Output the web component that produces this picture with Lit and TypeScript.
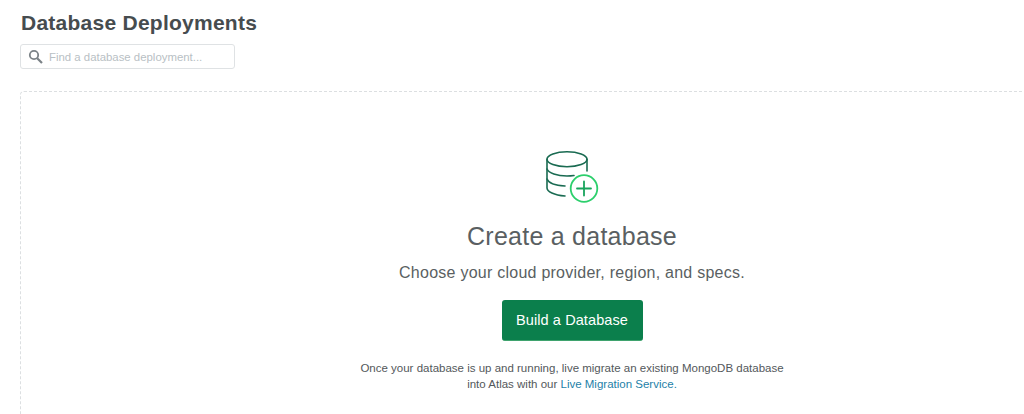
import { LitElement, html, css } from "lit";
import { customElement } from "lit/decorators.js";

@customElement("app-root")
export class AppRoot extends LitElement {
  static styles = css`
    :host { display: block; width: 1024px; height: 414px; overflow: hidden; background: #fff; font-family: "Liberation Sans", Arial, sans-serif; color: #494c4f; }
    .page { width: 1124px; padding: 10px 0 0 20px; box-sizing: border-box; }
    h1 { margin: 0 0 0 1px; font-size: 21px; line-height: 26px; font-weight: 700; color: #464c4f; letter-spacing: 0.25px; }
    .search { margin-top: 8px; width: 215px; height: 25px; box-sizing: border-box; border: 1px solid #dfe2e4; border-radius: 3px; display: flex; align-items: center; padding-left: 7px; gap: 6px; }
    .search svg { width: 15px; height: 15px; flex: none; }
    .search span { font-size: 11.4px; color: #b8c0c4; }
    .card { margin-top: 22px; height: 340px; border: 1px dashed #dcdfe1; border-radius: 4px; display: flex; flex-direction: column; align-items: center; box-sizing: border-box; padding-top: 59px; }
    .icon { width: 54px; height: 54px; display: block; }
    h2 { margin: 15px 0 0; font-size: 25px; line-height: 32px; font-weight: 400; color: #5a5f62; letter-spacing: 0.25px; }
    .sub { margin: 10px 0 0; font-size: 16px; line-height: 22px; color: #5a5f62; letter-spacing: 0.25px; }
    button { margin-top: 16px; width: 141px; height: 41px; border: none; border-bottom: 1px solid #3fa36e; border-radius: 3px; background: #0b7f4c; color: #fff; font: 400 14.5px "Liberation Sans", Arial, sans-serif; letter-spacing: 0.1px; padding: 0; }
    .note { margin: 19px 0 0; font-size: 11.5px; line-height: 16px; text-align: center; color: #53585b; }
    a { color: #1e7fa8; text-decoration: none; }
  `;

  render() {
    return html`<div class="page">
      <h1>Database Deployments</h1>
      <div class="search">
        <svg viewBox="0 0 15 15" fill="none" stroke="#7b8287" stroke-width="1.8"><circle cx="6" cy="6" r="4.2"></circle><path d="M9.2 9.2 L14 14" stroke-width="2.2"></path></svg>
        <span>Find a database deployment...</span>
      </div>
      <div class="card">
        <svg class="icon" viewBox="0 0 54 54" fill="none" stroke-width="1.6" stroke-linecap="round">
          <g stroke="#1a6b52">
            <ellipse cx="22" cy="8.300" rx="20" ry="7.500"></ellipse>
            <path d="M2 8.300V37c0 3.500 7 7 18 8"></path>
            <path d="M42 8.300V20"></path>
            <path d="M2 18c1.500 4 10 7 20 7 2.500 0 5-.2 7-.5"></path>
            <path d="M2 28c1.500 3.800 8 6.500 18 7"></path>
          </g>
          <circle cx="39" cy="37.500" r="13.300" stroke="#2ccf6c" stroke-width="1.800" fill="#fff"></circle>
          <path d="M39 30.500v14M32 37.500h14" stroke="#18a45c" stroke-width="1.800"></path>
        </svg>
        <h2>Create a database</h2>
        <p class="sub">Choose your cloud provider, region, and specs.</p>
        <button>Build a Database</button>
        <p class="note">Once your database is up and running, live migrate an existing MongoDB database<br>into Atlas with our <a>Live Migration Service.</a></p>
      </div>
    </div>`;
  }
}
